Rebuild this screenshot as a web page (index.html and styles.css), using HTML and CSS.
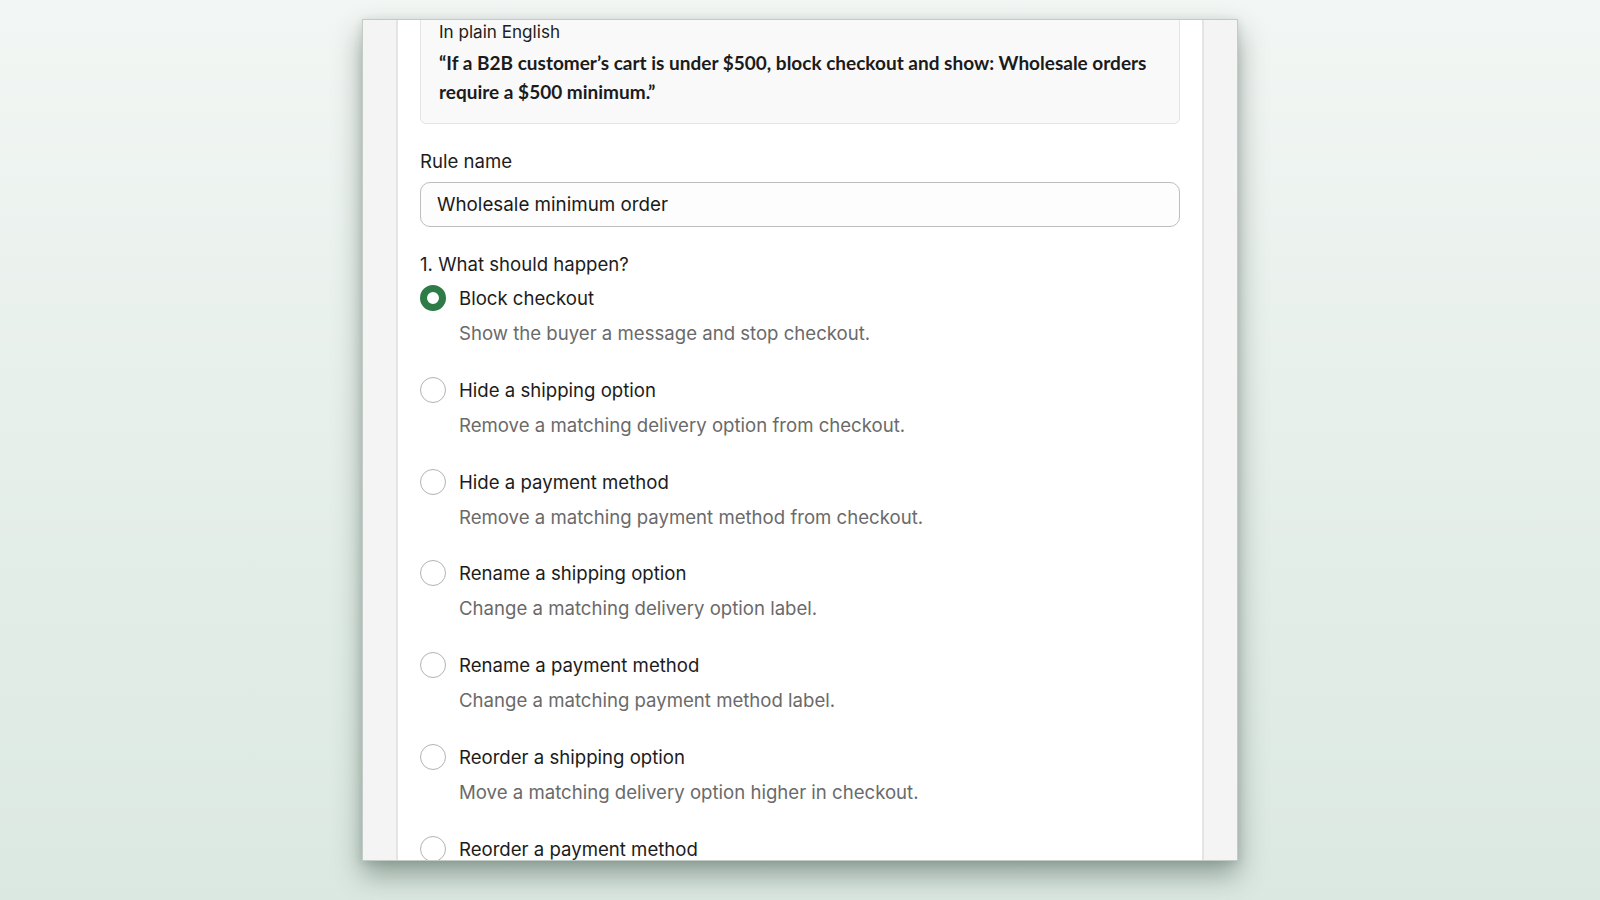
FILE: index.html
```html
<!DOCTYPE html>
<html lang="en">
<head>
<meta charset="utf-8">
<title>Rule editor</title>
<link rel="stylesheet" href="styles.css">
</head>
<body>
<div class="card">
  <div class="strip strip-left"></div>
  <main class="main">
    <div class="content">
      <section class="summary">
        <div class="summary-label">In plain English</div>
        <p class="summary-quote">“If a B2B customer’s cart is under $500, block checkout and show: Wholesale orders require a $500 minimum.”</p>
      </section>

      <label class="field-label" for="rule-name">Rule name</label>
      <div class="input"><span id="rule-name">Wholesale minimum order</span></div>

      <div class="question">1. What should happen?</div>

      <ul class="options">
        <li class="option">
          <div class="option-row"><span class="radio radio-on"></span><span class="option-title">Block checkout</span></div>
          <div class="option-desc">Show the buyer a message and stop checkout.</div>
        </li>
        <li class="option">
          <div class="option-row"><span class="radio"></span><span class="option-title">Hide a shipping option</span></div>
          <div class="option-desc">Remove a matching delivery option from checkout.</div>
        </li>
        <li class="option">
          <div class="option-row"><span class="radio"></span><span class="option-title">Hide a payment method</span></div>
          <div class="option-desc">Remove a matching payment method from checkout.</div>
        </li>
        <li class="option">
          <div class="option-row"><span class="radio"></span><span class="option-title">Rename a shipping option</span></div>
          <div class="option-desc">Change a matching delivery option label.</div>
        </li>
        <li class="option">
          <div class="option-row"><span class="radio"></span><span class="option-title">Rename a payment method</span></div>
          <div class="option-desc">Change a matching payment method label.</div>
        </li>
        <li class="option">
          <div class="option-row"><span class="radio"></span><span class="option-title">Reorder a shipping option</span></div>
          <div class="option-desc">Move a matching delivery option higher in checkout.</div>
        </li>
        <li class="option">
          <div class="option-row"><span class="radio"></span><span class="option-title">Reorder a payment method</span></div>
          <div class="option-desc">Move a matching payment method higher in checkout.</div>
        </li>
      </ul>
    </div>
  </main>
  <div class="strip strip-right"></div>
</div>
</body>
</html>
```

FILE: styles.css
```css
* { box-sizing: border-box; }

html, body {
  margin: 0;
  height: 900px;
}

body {
  background: linear-gradient(180deg, #f2f6f4 0%, #e6efea 50%, #dbe8e1 100%);
  font-family: Inter, "Noto Sans", sans-serif;
  color: #1d1d1d;
  padding-top: 19px;
  overflow: hidden;
}

.card {
  width: 876px;
  height: 842px;
  margin: 0 auto;
  display: flex;
  background: #ffffff;
  border: 1px solid #c2ccc7;
  box-shadow: 0 14px 26px rgba(50, 70, 60, 0.45), 0 2px 8px rgba(50, 70, 60, 0.15);
  overflow: hidden;
}

.strip {
  width: 35px;
  flex: 0 0 35px;
  background: #f4f4f4;
}
.strip-left { border-right: 2px solid #e4e4e4; }
.strip-right { border-left: 2px solid #e4e4e4; }

.main {
  flex: 1;
  overflow: hidden;
  padding: 0 22px;
}

.content {
  margin-top: -19px;
}

.summary {
  background: #f9f9f9;
  border: 1px solid #e4e4e4;
  border-radius: 6px;
  padding: 18px 18px 17px;
}

.summary-label {
  font-size: 17.1px;
  line-height: 24px;
  color: #202020;
}

.summary-quote {
  margin: 5px 0 0;
  font-family: Lato, "Noto Sans", sans-serif;
  font-weight: 700;
  font-size: 19px;
  line-height: 28.5px;
  color: #1b1b1b;
}

.field-label {
  display: block;
  margin-top: 24px;
  font-size: 18.6px;
  line-height: 26px;
  color: #1d1d1d;
}

.input {
  margin-top: 8px;
  height: 45px;
  border: 1px solid #bdbdbd;
  border-radius: 10px;
  background: #fdfdfd;
  padding: 0 16px;
  display: flex;
  align-items: center;
  font-size: 18.8px;
  color: #1a1a1a;
}

.question {
  margin-top: 24px;
  font-size: 18.6px;
  line-height: 26px;
  color: #1d1d1d;
}

.options {
  list-style: none;
  margin: 8px 0 0;
  padding: 0;
  display: flex;
  flex-direction: column;
  gap: 30.8px;
}

.option-row {
  display: flex;
  align-items: center;
  gap: 13px;
  height: 26px;
}

.radio {
  width: 26px;
  height: 26px;
  flex: 0 0 26px;
  border-radius: 50%;
  border: 1px solid #b3b3b3;
  background: #fff;
}

.radio-on {
  border: 7px solid #2e7b48;
}

.option-title {
  font-size: 18.6px;
  line-height: 26px;
  color: #1c1c1c;
}

.option-desc {
  margin-top: 9px;
  padding-left: 39px;
  font-size: 18.6px;
  line-height: 26px;
  color: #6a6a6a;
}
```
